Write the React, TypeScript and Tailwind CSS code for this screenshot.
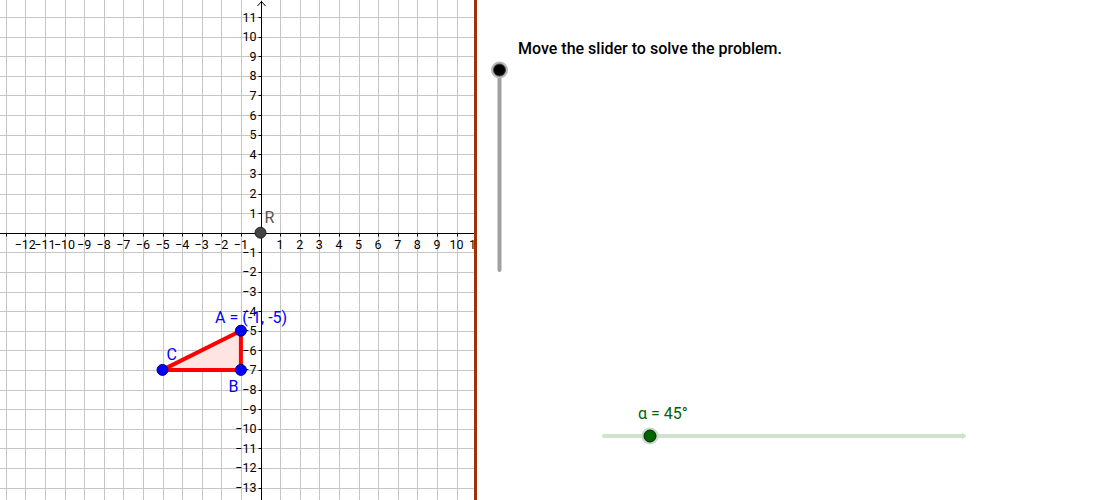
import React from 'react';

const UNIT = 19.6;
const OX = 260.5;
const OY = 232.7;

const px = (x: number) => OX + x * UNIT;
const py = (y: number) => OY - y * UNIT;
const crisp = (v: number) => Math.round(v) + 0.5;

const xs = Array.from({ length: 24 }, (_, i) => i - 13); // -13..10
const ys = Array.from({ length: 25 }, (_, i) => i - 13); // -13..11
const minus = (n: number) => (n < 0 ? `\u2212${-n}` : `${n}`);

function GraphicsView() {
  const A = { x: px(-1), y: py(-5) };
  const B = { x: px(-1), y: py(-7) };
  const C = { x: px(-5), y: py(-7) };

  return (
    <svg width={474} height={500} className="block" style={{ fontFamily: 'Roboto, "Liberation Sans", sans-serif' }}>
      <rect width={474} height={500} fill="#ffffff" />
      {/* grid */}
      {xs.map((k) => (
        <line key={`gx${k}`} x1={crisp(px(k))} x2={crisp(px(k))} y1={0} y2={500} stroke="#c6c6c6" strokeWidth={1} />
      ))}
      {ys.map((k) => (
        <line key={`gy${k}`} x1={0} x2={474} y1={crisp(py(k))} y2={crisp(py(k))} stroke="#c6c6c6" strokeWidth={1} />
      ))}

      {/* axes */}
      <line x1={0} x2={474} y1={crisp(OY)} y2={crisp(OY)} stroke="#000" strokeWidth={1} />
      <line x1={crisp(OX)} x2={crisp(OX)} y1={1} y2={500} stroke="#000" strokeWidth={1} />
      <polyline points={`${crisp(OX) - 4},6 ${crisp(OX)},1.5 ${crisp(OX) + 4},6`} fill="none" stroke="#000" strokeWidth={1} />

      {/* ticks */}
      {xs.filter((k) => k !== 0).map((k) => (
        <line key={`tx${k}`} x1={crisp(px(k))} x2={crisp(px(k))} y1={crisp(OY)} y2={crisp(OY) + 3} stroke="#000" />
      ))}
      {ys.filter((k) => k !== 0).map((k) => (
        <line key={`ty${k}`} x1={crisp(OX) - 3} x2={crisp(OX)} y1={crisp(py(k))} y2={crisp(py(k))} stroke="#000" />
      ))}

      {/* labels */}
      {[...xs, 11].filter((k) => k !== 0 && k !== -13).map((k) => (
        <text key={`lx${k}`} x={px(k)} y={248.5} fontSize={12.5} textAnchor="middle" fill="#000">
          {minus(k)}
        </text>
      ))}
      {ys.filter((k) => k !== 0).map((k) => (
        <text key={`ly${k}`} x={256.5} y={py(k) + 4.5} fontSize={12.5} textAnchor="end" fill="#000">
          {minus(k)}
        </text>
      ))}

      {/* triangle */}
      <polygon
        points={`${A.x},${A.y} ${B.x},${B.y} ${C.x},${C.y}`}
        fill="#ffe4e4"
        stroke="#ff0000"
        strokeWidth={4}
        strokeLinejoin="round"
      />

      {/* R */}
      <circle cx={OX} cy={OY} r={5.5} fill="#444444" stroke="#222" strokeWidth={1} />
      <text x={264.5} y={223} fontSize={16} fill="#555555">R</text>

      {/* points */}
      {[A, B, C].map((p, i) => (
        <circle key={i} cx={p.x} cy={p.y} r={5.5} fill="#0000ff" stroke="#00007a" strokeWidth={1} />
      ))}
      <text x={215} y={322.5} fontSize={16} fill="#0000ff">A = (-1, -5)</text>
      <text x={166.5} y={359.5} fontSize={16} fill="#0000ff">C</text>
      <text x={228.5} y={392} fontSize={16} fill="#0000ff">B</text>
    </svg>
  );
}

function Sliders() {
  // coordinates relative to the right panel (page x - 477)
  return (
    <svg
      width={621}
      height={500}
      className="pointer-events-none absolute left-0 top-0"
      style={{ fontFamily: 'Roboto, "Liberation Sans", sans-serif' }}
    >
      {/* vertical slider */}
      <line x1={22.5} x2={22.5} y1={70} y2={270} stroke="#a0a0a0" strokeWidth={4} strokeLinecap="round" />
      <circle cx={22.5} cy={70} r={8.5} fill="#b8b8b8" />
      <circle cx={22.5} cy={70} r={6} fill="#000" stroke="#444" strokeWidth={1} />

      {/* horizontal slider */}
      <line x1={127} x2={486} y1={436} y2={436} stroke="#cfe3cf" strokeWidth={4} strokeLinecap="round" />
      <polygon points="485,432.5 489.5,436 485,439.5" fill="#cfe3cf" />
      <circle cx={173} cy={436} r={8.5} fill="#c6dcc6" />
      <circle cx={173} cy={436} r={6} fill="#006400" stroke="#0a1f0a" strokeWidth={1} />
      <text x={161} y={418.5} fontSize={16} fill="#006400">α = 45°</text>
    </svg>
  );
}

export default function App() {
  return (
    <div className="flex h-[500px] w-[1098px] overflow-hidden bg-white">
      <div className="h-[500px] w-[474px] shrink-0 overflow-hidden">
        <GraphicsView />
      </div>
      <div className="h-[500px] w-[3px] shrink-0 bg-[#9c3306]" />
      <div className="relative h-[500px] flex-1">
        <p className="pl-[41px] pt-[38px] text-[16px] font-medium leading-[21px] text-black [font-family:Roboto,'Liberation_Sans',sans-serif]">
          Move the slider to solve the problem.
        </p>
        <Sliders />
      </div>
    </div>
  );
}
